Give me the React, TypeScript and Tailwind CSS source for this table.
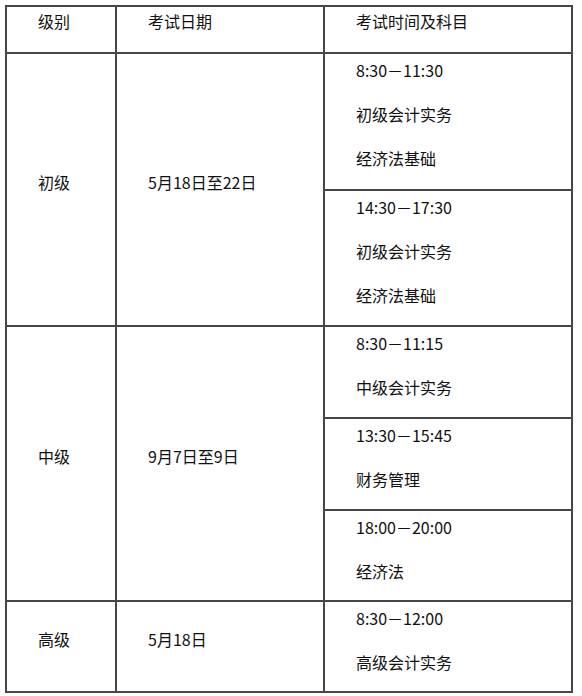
import React from 'react'

type Slot = { time: string; subjects: string[]; h: string }

type Level = { name: string; date: string; slots: Slot[] }

const levels: Level[] = [
  {
    name: '初级',
    date: '5月18日至22日',
    slots: [
      { time: '8:30－11:30', subjects: ['初级会计实务', '经济法基础'], h: 'h-[137px]' },
      { time: '14:30－17:30', subjects: ['初级会计实务', '经济法基础'], h: 'h-[136px]' },
    ],
  },
  {
    name: '中级',
    date: '9月7日至9日',
    slots: [
      { time: '8:30－11:15', subjects: ['中级会计实务'], h: 'h-[92px]' },
      { time: '13:30－15:45', subjects: ['财务管理'], h: 'h-[92px]' },
      { time: '18:00－20:00', subjects: ['经济法'], h: 'h-[91px]' },
    ],
  },
  {
    name: '高级',
    date: '5月18日',
    slots: [{ time: '8:30－12:00', subjects: ['高级会计实务'], h: 'h-[91px]' }],
  },
]

const font = { fontFamily: '"Noto Sans CJK SC", "Noto Sans", sans-serif' }

function SlotCell({ slot }: { slot: Slot }) {
  return (
    <div className={`${slot.h} border-b-2 border-[#474747] pt-[4px] pl-[31px]`}>
      <p className="leading-[24px] mb-[20px]">{slot.time}</p>
      {slot.subjects.map((s) => (
        <p key={s} className="leading-[24px] mb-[20px]">
          {s}
        </p>
      ))}
    </div>
  )
}

export default function App() {
  return (
    <div className="min-h-[696px] w-[582px] bg-white pt-[5px] pl-[5px]" style={font}>
      <div className="w-[568px] border-l-2 border-t-2 border-[#474747] text-[16px] text-[#111]">
        {/* header */}
        <div className="flex h-[47px]">
          <div className="w-[110px] shrink-0 border-r-2 border-b-2 border-[#474747] pt-[2px] pl-[31px] leading-[24px]">
            级别
          </div>
          <div className="w-[208px] shrink-0 border-r-2 border-b-2 border-[#474747] pt-[2px] pl-[31px] leading-[24px]">
            考试日期
          </div>
          <div className="flex-1 border-r-2 border-b-2 border-[#474747] pt-[2px] pl-[31px] leading-[24px]">
            考试时间及科目
          </div>
        </div>

        {levels.map((lv) => (
          <div key={lv.name} className="flex">
            <div className="w-[110px] shrink-0 border-r-2 border-b-2 border-[#474747] flex items-center pb-[16px] pl-[31px] leading-[24px]">
              {lv.name}
            </div>
            <div className="w-[208px] shrink-0 border-r-2 border-b-2 border-[#474747] flex items-center pb-[16px] pl-[31px] leading-[24px]">
              {lv.date}
            </div>
            <div className="flex-1 flex flex-col border-r-2 border-[#474747]">
              {lv.slots.map((s) => (
                <SlotCell key={s.time} slot={s} />
              ))}
            </div>
          </div>
        ))}
      </div>
    </div>
  )
}
